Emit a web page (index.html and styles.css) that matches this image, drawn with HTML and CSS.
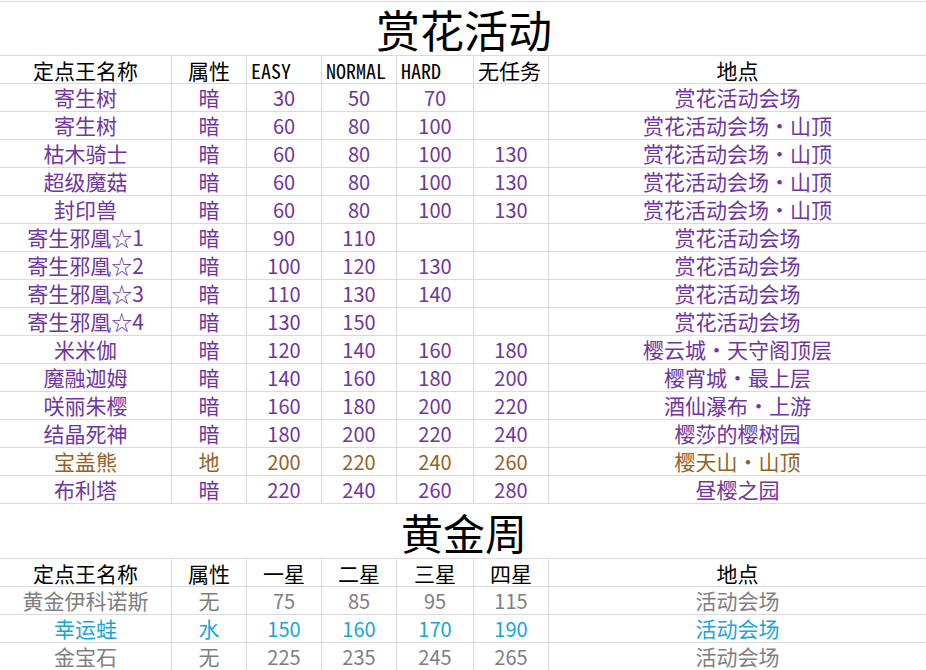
FILE: index.html
```html
<!DOCTYPE html>
<html lang="zh-CN">
<head>
<meta charset="utf-8">
<title>赏花活动</title>
<link rel="stylesheet" href="styles.css">
</head>
<body>
<div class="sheet">
  <div class="title">赏花活动</div>
  <div class="row head">
    <div class="c">定点王名称</div><div class="c">属性</div><div class="c mono">EASY</div><div class="c mono">NORMAL</div><div class="c mono">HARD</div><div class="c left">无任务</div><div class="c">地点</div>
  </div>
  <div class="row purple"><div class="c">寄生树</div><div class="c">暗</div><div class="c">30</div><div class="c">50</div><div class="c">70</div><div class="c"></div><div class="c">赏花活动会场</div></div>
  <div class="row purple"><div class="c">寄生树</div><div class="c">暗</div><div class="c">60</div><div class="c">80</div><div class="c">100</div><div class="c"></div><div class="c">赏花活动会场・山顶</div></div>
  <div class="row purple"><div class="c">枯木骑士</div><div class="c">暗</div><div class="c">60</div><div class="c">80</div><div class="c">100</div><div class="c">130</div><div class="c">赏花活动会场・山顶</div></div>
  <div class="row purple"><div class="c">超级魔菇</div><div class="c">暗</div><div class="c">60</div><div class="c">80</div><div class="c">100</div><div class="c">130</div><div class="c">赏花活动会场・山顶</div></div>
  <div class="row purple"><div class="c">封印兽</div><div class="c">暗</div><div class="c">60</div><div class="c">80</div><div class="c">100</div><div class="c">130</div><div class="c">赏花活动会场・山顶</div></div>
  <div class="row purple"><div class="c">寄生邪凰☆1</div><div class="c">暗</div><div class="c">90</div><div class="c">110</div><div class="c"></div><div class="c"></div><div class="c">赏花活动会场</div></div>
  <div class="row purple"><div class="c">寄生邪凰☆2</div><div class="c">暗</div><div class="c">100</div><div class="c">120</div><div class="c">130</div><div class="c"></div><div class="c">赏花活动会场</div></div>
  <div class="row purple"><div class="c">寄生邪凰☆3</div><div class="c">暗</div><div class="c">110</div><div class="c">130</div><div class="c">140</div><div class="c"></div><div class="c">赏花活动会场</div></div>
  <div class="row purple"><div class="c">寄生邪凰☆4</div><div class="c">暗</div><div class="c">130</div><div class="c">150</div><div class="c"></div><div class="c"></div><div class="c">赏花活动会场</div></div>
  <div class="row purple"><div class="c">米米伽</div><div class="c">暗</div><div class="c">120</div><div class="c">140</div><div class="c">160</div><div class="c">180</div><div class="c">樱云城・天守阁顶层</div></div>
  <div class="row purple"><div class="c">魔融迦姆</div><div class="c">暗</div><div class="c">140</div><div class="c">160</div><div class="c">180</div><div class="c">200</div><div class="c">樱宵城・最上层</div></div>
  <div class="row purple"><div class="c">咲丽朱樱</div><div class="c">暗</div><div class="c">160</div><div class="c">180</div><div class="c">200</div><div class="c">220</div><div class="c">酒仙瀑布・上游</div></div>
  <div class="row purple"><div class="c">结晶死神</div><div class="c">暗</div><div class="c">180</div><div class="c">200</div><div class="c">220</div><div class="c">240</div><div class="c">樱莎的樱树园</div></div>
  <div class="row brown"><div class="c">宝盖熊</div><div class="c">地</div><div class="c">200</div><div class="c">220</div><div class="c">240</div><div class="c">260</div><div class="c">樱天山・山顶</div></div>
  <div class="row purple"><div class="c">布利塔</div><div class="c">暗</div><div class="c">220</div><div class="c">240</div><div class="c">260</div><div class="c">280</div><div class="c">昼樱之园</div></div>

  <div class="title title2">黄金周</div>
  <div class="row head">
    <div class="c">定点王名称</div><div class="c">属性</div><div class="c">一星</div><div class="c">二星</div><div class="c">三星</div><div class="c">四星</div><div class="c">地点</div>
  </div>
  <div class="row gray"><div class="c">黄金伊科诺斯</div><div class="c">无</div><div class="c">75</div><div class="c">85</div><div class="c">95</div><div class="c">115</div><div class="c">活动会场</div></div>
  <div class="row cyan"><div class="c">幸运蛙</div><div class="c">水</div><div class="c">150</div><div class="c">160</div><div class="c">170</div><div class="c">190</div><div class="c">活动会场</div></div>
  <div class="row gray"><div class="c">金宝石</div><div class="c">无</div><div class="c">225</div><div class="c">235</div><div class="c">245</div><div class="c">265</div><div class="c">活动会场</div></div>
</div>
</body>
</html>
```
FILE: styles.css
```css
html, body {
  margin: 0;
  padding: 0;
  background: #ffffff;
}
body {
  font-family: "Noto Sans CJK SC", "Noto Sans", sans-serif;
  color: #000000;
}
.sheet {
  width: 926px;
  margin-top: 1px;
  border-top: 1px solid #dadada;
}
.title {
  box-sizing: border-box;
  height: 54px;
  border-bottom: 1px solid #dadada;
  text-align: center;
  font-size: 44px;
  line-height: 54px;
  padding-left: 2px;
}
.title2 {
  height: 55px;
  line-height: 56px;
  font-size: 42px;
}
.row {
  box-sizing: border-box;
  height: 28px;
  display: grid;
  grid-template-columns: 172px 75px 75px 75px 77px 75px 1fr;
  border-bottom: 1px solid #dadada;
}
.c {
  box-sizing: border-box;
  border-right: 1px solid #dadada;
  font-size: 21px;
  line-height: 27px;
  text-align: center;
  white-space: nowrap;
}
.c:last-child {
  border-right: none;
}
.row:not(.head) .c:nth-child(n+3):nth-child(-n+6) {
  font-size: 20px;
}
.head .c {
  line-height: 29px;
}
.head .mono {
  text-align: left;
  padding-left: 4px;
  font-family: "Noto Sans Mono CJK SC", "DejaVu Sans Mono", monospace;
  font-size: 20px;
}
.head .left {
  text-align: left;
  padding-left: 4px;
}
.purple { color: #7035a0; }
.brown { color: #98601f; }
.gray { color: #7f7f7f; }
.cyan { color: #18a6d8; }
```
